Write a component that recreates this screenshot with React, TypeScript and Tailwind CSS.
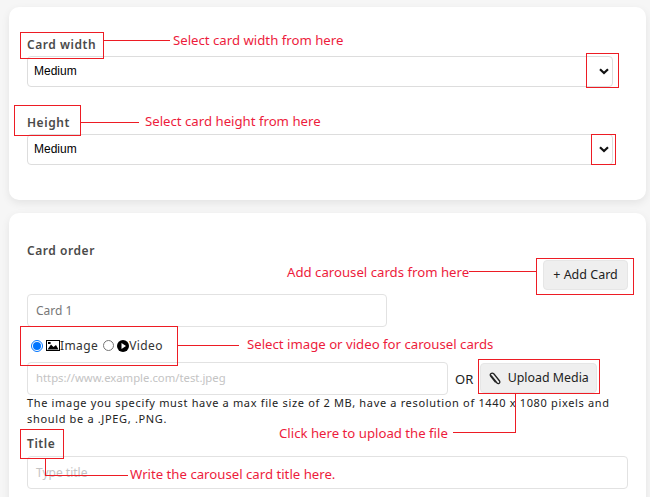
import React from 'react';

const RED = 'border-[#ed1c24]';

const Box = ({ className }: { className: string }) => (
  <div className={`absolute border ${RED} ${className}`} />
);

const Line = ({ className }: { className: string }) => (
  <div className={`absolute bg-[#ed1c24] ${className}`} />
);

const Note = ({ className, children }: { className: string; children: React.ReactNode }) => (
  <span className={`absolute whitespace-nowrap text-[13.2px] leading-[18px] text-[#ed1c3c] font-['Noto_Sans',sans-serif] ${className}`}>
    {children}
  </span>
);

const Chevron = () => (
  <svg width="10" height="7" viewBox="0 0 10 7" className="absolute right-[3px] top-[11px]">
    <path d="M1 1.2 L5 5 L9 1.2" fill="none" stroke="#111" strokeWidth="2.2" />
  </svg>
);

const FakeSelect = () => (
  <div className="relative flex h-[31px] w-[586px] items-center rounded-[4px] border border-[#dddddd] bg-white pb-[2px] pl-[6px] font-['Liberation_Sans',sans-serif] text-[12px] text-black">
    Medium
    <Chevron />
  </div>
);

const ImageIcon = () => (
  <svg width="14" height="11" viewBox="0 0 14 11" className="shrink-0">
    <rect x="0.5" y="0.5" width="13" height="10" fill="#fff" stroke="#000" />
    <path d="M1.5 9.5 L5 4.5 L7.5 7 L10 5 L12.5 9.5 Z" fill="#000" />
    <rect x="2" y="2" width="2.6" height="2" fill="#000" />
  </svg>
);

const VideoIcon = () => (
  <svg width="12" height="12" viewBox="0 0 12 12" className="shrink-0">
    <circle cx="6" cy="6" r="6" fill="#000" />
    <path d="M4.5 3 L9 6 L4.5 9 Z" fill="#fff" />
  </svg>
);

const PaperClip = () => (
  <svg width="12" height="13" viewBox="0 0 12 13" className="shrink-0">
    <path d="M2 3.5 L8 11 C9 12 10.6 11.6 10.8 10.4 C11 9.6 10.6 9 10.2 8.5 L5 2 C4 1 2.6 1 1.8 1.8 C1 2.6 1.2 3.6 1.8 4.4 L6.6 10.4" fill="none" stroke="#222" strokeWidth="1.3" />
  </svg>
);

export default function App() {
  return (
    <div className="relative h-[497px] w-[650px] overflow-hidden bg-[#f6f6f6] pl-[9px] pr-[4px] pt-[7px] font-['Noto_Sans',sans-serif]">
      {/* first card */}
      <section className="h-[193px] rounded-[10px] bg-white pl-[18px] pt-[29px] shadow-[0_3px_8px_rgba(0,0,0,0.08)]">
        <label className="block h-[20px] text-[12px] leading-[17px] font-semibold tracking-[0.55px] text-[#4a4a4a]">Card width</label>
        <FakeSelect />
        <label className="mt-[27px] block h-[20px] text-[12px] leading-[17px] font-semibold tracking-[0.55px] text-[#4a4a4a]">Height</label>
        <FakeSelect />
      </section>

      {/* second card */}
      <section className="mt-[13px] h-[300px] rounded-t-[10px] bg-white pl-[18px] pr-[18px] pt-[30px] shadow-[0_3px_8px_rgba(0,0,0,0.08)]">
        <div className="text-[12px] leading-[16px] font-semibold tracking-[0.55px] text-[#4a4a4a]">Card order</div>
        <div className="mt-[1px] flex justify-end">
          <button className="h-[30px] w-[85px] rounded-[4px] border border-[#e6e6e6] bg-[#efefef] text-[12.5px] text-[#222]">+ Add Card</button>
        </div>
        <div className="mt-[4px] flex h-[33px] w-[360px] items-center rounded-[4px] border border-[#e2e2e2] pl-[8px] text-[12px] text-[#777]">Card 1</div>
        <div className="mt-[10px] flex h-[17px] items-center pl-[4px] text-[12px] tracking-[0.4px] text-[#333]">
          <span className="flex h-[12px] w-[12px] items-center justify-center rounded-full border border-[#0075ff]">
            <span className="h-[8px] w-[8px] rounded-full bg-[#0075ff]" />
          </span>
          <span className="ml-[3px]"><ImageIcon /></span>
          <span>Image</span>
          <span className="ml-[5px] h-[11px] w-[11px] rounded-full border border-[#767676]" />
          <span className="ml-[3px]"><VideoIcon /></span>
          <span>Video</span>
        </div>
        <div className="mt-[8px] flex items-start">
          <div className="flex h-[33px] w-[421px] items-center rounded-[4px] border border-[#e2e2e2] pl-[8px] text-[11.3px] text-[#c4c4c4]">https://www.example.com/test.jpeg</div>
          <span className="ml-[7px] mt-[9px] text-[13px] leading-[17px] text-[#222]">OR</span>
          <button className="ml-[7px] mt-[1px] flex h-[30px] w-[117px] items-center justify-center gap-[7px] rounded-[4px] border border-[#e6e6e6] bg-[#efefef] text-[12.4px] text-[#222]">
            <PaperClip />
            Upload Media
          </button>
        </div>
        <p className="w-[590px] text-[11px] leading-[16px] tracking-[0.66px] text-[#222]">
          The image you specify must have a max file size of 2 MB, have a resolution of 1440 x 1080 pixels and should be a .JPEG, .PNG.
        </p>
        <div className="mt-[8px] text-[12px] leading-[17px] font-semibold tracking-[0.55px] text-[#4a4a4a]">Title</div>
        <div className="mt-[4px] flex h-[33px] w-[601px] items-center rounded-[4px] border border-[#e2e2e2] pl-[8px] text-[12px] text-[#c4c4c4]">Type title</div>
      </section>

      {/* red annotations over the form */}
      <Box className="left-[20px] top-[32px] h-[27px] w-[84px]" />
      <Line className="left-[104px] top-[40px] h-px w-[66px]" />
      <Note className="left-[173px] top-[31px]">Select card width from here</Note>
      <Box className="left-[586px] top-[53px] h-[35px] w-[33px]" />

      <Box className="left-[14px] top-[105px] h-[31px] w-[67px]" />
      <Line className="left-[81px] top-[122px] h-px w-[58px]" />
      <Note className="left-[145px] top-[112px]">Select card height from here</Note>
      <Box className="left-[591px] top-[134px] h-[31px] w-[25px]" />

      <Box className="left-[536px] top-[258px] h-[37px] w-[98px]" />
      <Line className="left-[469px] top-[271px] h-px w-[67px]" />
      <Note className="left-[287px] top-[263px]">Add carousel cards from here</Note>

      <Box className="left-[20px] top-[326px] h-[40px] w-[158px]" />
      <Line className="left-[178px] top-[345px] h-px w-[61px]" />
      <Note className="left-[247px] top-[335px]">Select image or video for carousel cards</Note>

      <Box className="left-[478px] top-[359px] h-[35px] w-[122px]" />
      <Line className="left-[515px] top-[394px] h-[38px] w-px" />
      <Line className="left-[453px] top-[432px] h-px w-[63px]" />
      <Note className="left-[279px] top-[424px]">Click here to upload the file</Note>

      <Box className="left-[20px] top-[429px] h-[30px] w-[44px]" />
      <Line className="left-[45px] top-[459px] h-[16px] w-px" />
      <Line className="left-[45px] top-[475px] h-px w-[83px]" />
      <Note className="left-[130px] top-[465px]">Write the carousel card title here.</Note>
    </div>
  );
}
